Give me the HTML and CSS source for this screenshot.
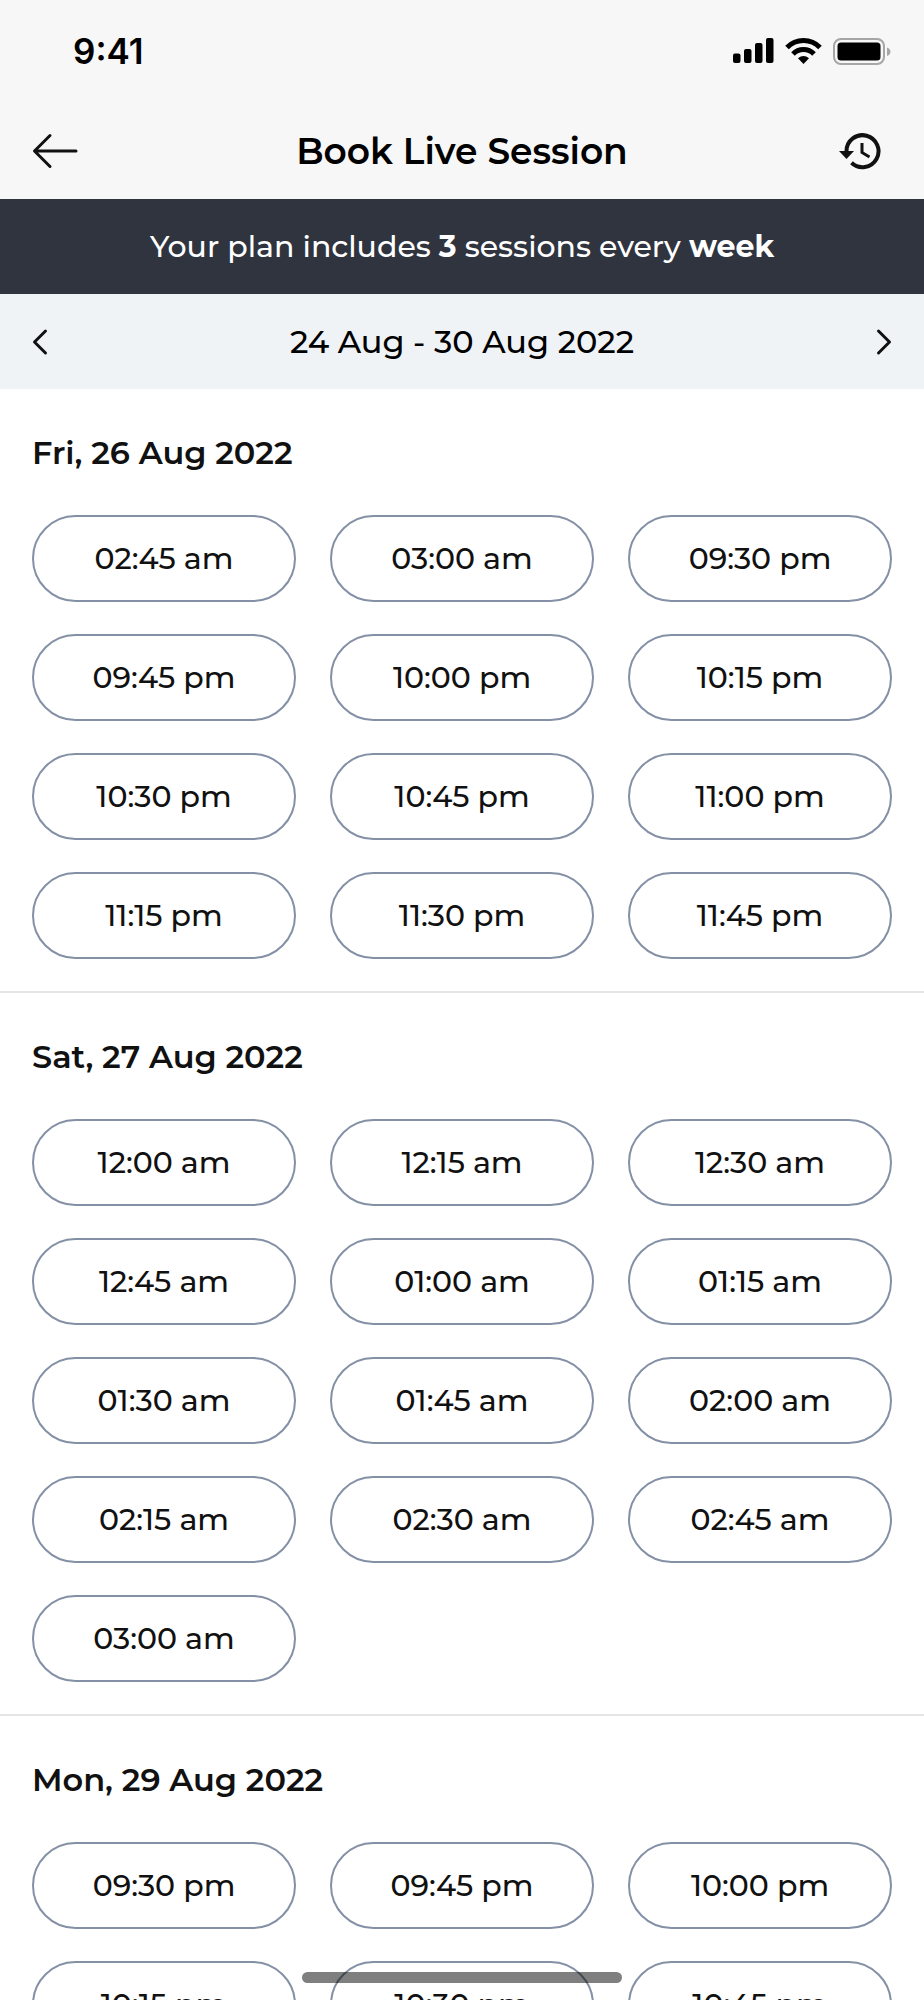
FILE: index.html
```html
<!DOCTYPE html>
<html lang="en">
<head>
<meta charset="utf-8">
<meta name="viewport" content="width=device-width, initial-scale=1">
<title>Book Live Session</title>
<link rel="stylesheet" href="styles.css">
</head>
<body>
<div class="screen">
  <header class="top">
    <div class="status">
      <time class="clock">9:41</time>
      <svg class="status-icons" viewBox="0 0 159 27" aria-hidden="true">
        <rect x="0" y="15.500" width="7.500" height="9.500" rx="2"/>
        <rect x="11" y="11" width="7.500" height="14" rx="2"/>
        <rect x="22" y="5" width="7.500" height="20" rx="2"/>
        <rect x="33" y="0" width="7.500" height="25" rx="2"/>
        <g fill="none" stroke="#000" stroke-width="5">
          <path d="M54 9.500A23 23 0 0 1 87 9.500"/>
          <path d="M60 16A14.500 14.500 0 0 1 81 16"/>
        </g>
        <path d="M65 20.300Q70.500 15.700 76 20.300L70.500 26Z"/>
        <rect x="101" y="1" width="50" height="25" rx="7" fill="none" stroke="#a6a6a6" stroke-width="2"/>
        <rect x="104.500" y="4.500" width="43" height="18" rx="3.500"/>
        <path d="M154 9.500Q157.500 11 157.500 13.700T154 18Z" fill="#a6a6a6"/>
      </svg>
    </div>
    <div class="nav">
      <button class="icon-button" type="button" aria-label="Back">
        <svg class="icon-wide" viewBox="0 0 56 38" fill="none" stroke="#111" stroke-width="3" stroke-linecap="round" stroke-linejoin="round" aria-hidden="true"><path d="M44 19H3M18 3.500L2.500 19L18 34.500"/></svg>
      </button>
      <h1 class="title">Book Live Session</h1>
      <button class="icon-button icon-button-end" type="button" aria-label="Session history">
        <svg class="icon-wide" viewBox="0 0 56 38" aria-hidden="true">
          <path d="M10.500 20V19A16 16 0 1 1 15.500 30.800" fill="none" stroke="#111" stroke-width="4"/>
          <path d="M3 19H18L10.500 27Z" fill="#111"/>
          <path d="M26 11V20.500L33.500 25" fill="none" stroke="#111" stroke-width="3"/>
        </svg>
      </button>
    </div>
  </header>
  <p class="banner">Your plan includes <strong>3</strong> sessions every <strong>week</strong></p>
  <div class="week">
    <button class="icon-button" type="button" aria-label="Previous week">
      <svg class="chevron" viewBox="0 0 16 28" aria-hidden="true"><path d="M13.500 3L2.500 14L13.500 25"/></svg>
    </button>
    <h2 class="week-range">24 Aug - 30 Aug 2022</h2>
    <button class="icon-button icon-button-end" type="button" aria-label="Next week">
      <svg class="chevron" viewBox="0 0 16 28" aria-hidden="true"><path d="M2.500 3L13.500 14L2.500 25"/></svg>
    </button>
  </div>
  <main class="days">
    <section class="day">
      <h3 class="day-title">Fri, 26 Aug 2022</h3>
      <div class="slots">
        <button class="slot" type="button">02:45 am</button>
        <button class="slot" type="button">03:00 am</button>
        <button class="slot" type="button">09:30 pm</button>
        <button class="slot" type="button">09:45 pm</button>
        <button class="slot" type="button">10:00 pm</button>
        <button class="slot" type="button">10:15 pm</button>
        <button class="slot" type="button">10:30 pm</button>
        <button class="slot" type="button">10:45 pm</button>
        <button class="slot" type="button">11:00 pm</button>
        <button class="slot" type="button">11:15 pm</button>
        <button class="slot" type="button">11:30 pm</button>
        <button class="slot" type="button">11:45 pm</button>
      </div>
    </section>
    <section class="day">
      <h3 class="day-title">Sat, 27 Aug 2022</h3>
      <div class="slots">
        <button class="slot" type="button">12:00 am</button>
        <button class="slot" type="button">12:15 am</button>
        <button class="slot" type="button">12:30 am</button>
        <button class="slot" type="button">12:45 am</button>
        <button class="slot" type="button">01:00 am</button>
        <button class="slot" type="button">01:15 am</button>
        <button class="slot" type="button">01:30 am</button>
        <button class="slot" type="button">01:45 am</button>
        <button class="slot" type="button">02:00 am</button>
        <button class="slot" type="button">02:15 am</button>
        <button class="slot" type="button">02:30 am</button>
        <button class="slot" type="button">02:45 am</button>
        <button class="slot" type="button">03:00 am</button>
      </div>
    </section>
    <section class="day">
      <h3 class="day-title">Mon, 29 Aug 2022</h3>
      <div class="slots">
        <button class="slot" type="button">09:30 pm</button>
        <button class="slot" type="button">09:45 pm</button>
        <button class="slot" type="button">10:00 pm</button>
        <button class="slot" type="button">10:15 pm</button>
        <button class="slot" type="button">10:30 pm</button>
        <button class="slot" type="button">10:45 pm</button>
      </div>
    </section>
  </main>
  <div class="home-indicator"></div>
</div>
</body>
</html>
```
FILE: styles.css
```css
* {
  box-sizing: border-box;
}

body {
  margin: 0;
  background: #fff;
  color: #111;
  font-family: Montserrat, Inter, "Liberation Sans", sans-serif;
}

h1, h2, h3, p {
  margin: 0;
}

button {
  margin: 0;
  padding: 0;
  border: 0;
  background: none;
  color: inherit;
  font: inherit;
  cursor: pointer;
}

.screen {
  position: relative;
  display: flex;
  flex-direction: column;
  height: 100vh;
  overflow: hidden;
}

.top {
  flex: none;
  background: #f7f7f7;
  color: #000;
}

.status {
  display: flex;
  align-items: center;
  justify-content: space-between;
  padding: 30px 32px 29px 73px;
}

.clock {
  font-family: Inter, sans-serif;
  font-size: 35px;
  font-weight: 600;
  line-height: 42px;
}

.status-icons {
  width: 159px;
  height: 27px;
}

.nav,
.week {
  display: grid;
  grid-template-columns: 56px 1fr 56px;
  align-items: center;
  padding: 27px 32px 26px;
  text-align: center;
}

.icon-button {
  display: flex;
  align-items: center;
  height: 44px;
}

.icon-button-end {
  justify-content: flex-end;
}

.icon-wide {
  width: 56px;
  height: 38px;
}

.title {
  padding-top: 1px;
  font-size: 36px;
  font-weight: 600;
  line-height: 44px;
}

.banner {
  flex: none;
  padding: 28px 32px 27px;
  background: #30343f;
  color: #fff;
  font-size: 30px;
  font-weight: 500;
  line-height: 40px;
  text-align: center;
}

.week {
  flex: none;
  padding: 25px 32px;
  background: #eff3f6;
  color: #000;
}

.week-range {
  padding-top: 1px;
  font-size: 32px;
  font-weight: 500;
  line-height: 44px;
}

.chevron {
  width: 16px;
  height: 28px;
  fill: none;
  stroke: #111;
  stroke-width: 3;
  stroke-linecap: round;
  stroke-linejoin: round;
}

.days {
  flex: 1;
  min-height: 0;
  overflow: hidden;
}

.day {
  padding: 46px 32px 32px;
  border-bottom: 2px solid #e5e5e5;
}

.day-title {
  margin-bottom: 44px;
  font-size: 32px;
  font-weight: 600;
  line-height: 36px;
}

.slots {
  display: grid;
  grid-template-columns: repeat(3, 1fr);
  gap: 32px 34px;
}

.slot {
  height: 87px;
  border: 2px solid #8490a5;
  border-radius: 44px;
  font-size: 30px;
  font-weight: 500;
}

.home-indicator {
  position: absolute;
  bottom: 17px;
  left: 50%;
  width: 320px;
  height: 11px;
  margin-left: -160px;
  border-radius: 6px;
  background: rgba(0, 0, 0, 0.5);
}
```
